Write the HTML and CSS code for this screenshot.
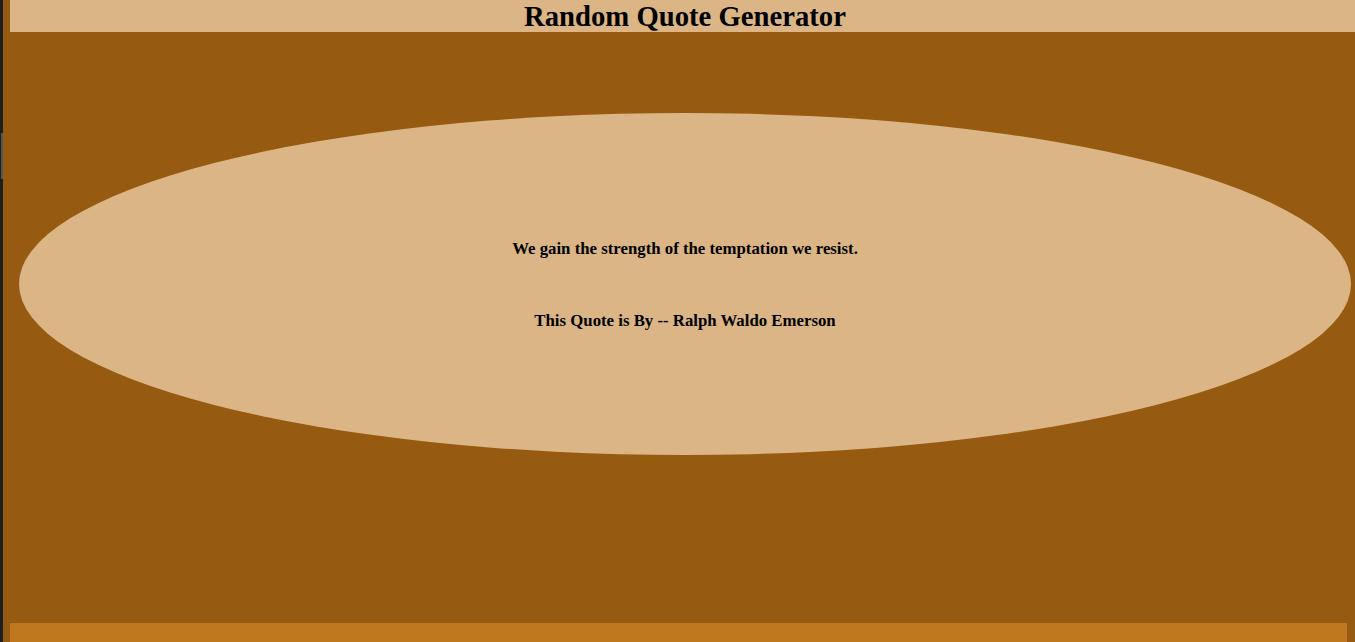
FILE: index.html
```html
<!DOCTYPE html>
<html>
<head>
<meta charset="utf-8">
<link rel="stylesheet" href="styles.css">
</head>
<body>
<div class="scroll-thumb"></div>
<header class="top-bar"><h1 class="title">Random Quote Generator</h1></header>
<main class="stage">
  <section class="quote-oval">
    <p class="quote-text">We gain the strength of the temptation we resist.</p>
    <p class="quote-author">This Quote is By -- Ralph Waldo Emerson</p>
  </section>
</main>
<footer class="bottom-bar"></footer>
</body>
</html>
```
FILE: styles.css
```css
html {
  background: #1e1e1e;
  height: 100%;
}
body {
  margin: 0 0 0 3px;
  min-height: 100%;
  background: #965a10;
  font-family: "Liberation Serif", "Times New Roman", serif;
  color: #000;
  overflow: hidden;
  display: flex;
  flex-direction: column;
}
.scroll-thumb {
  position: fixed;
  left: 1px;
  top: 133px;
  width: 2px;
  height: 46px;
  background: #555;
}
.top-bar {
  margin-left: 7px;
  height: 32px;
  background: #dbb585;
  display: flex;
  justify-content: center;
  align-items: center;
}
.title {
  margin: 0;
  font-size: 28.7px;
  font-weight: bold;
  line-height: 32px;
  padding-left: 5px;
}
.stage {
  padding: 81px 4px 0 16px;
}
.quote-oval {
  height: 342px;
  background: #dbb585;
  border-radius: 50%;
  display: flex;
  flex-direction: column;
  align-items: center;
  justify-content: center;
  gap: 53px;
}
.quote-text,
.quote-author {
  margin: 0;
  font-size: 16.8px;
  font-weight: bold;
  line-height: 19px;
}
.bottom-bar {
  margin: auto 8px 0 7px;
  height: 19px;
  background: #c0781f;
}
```
